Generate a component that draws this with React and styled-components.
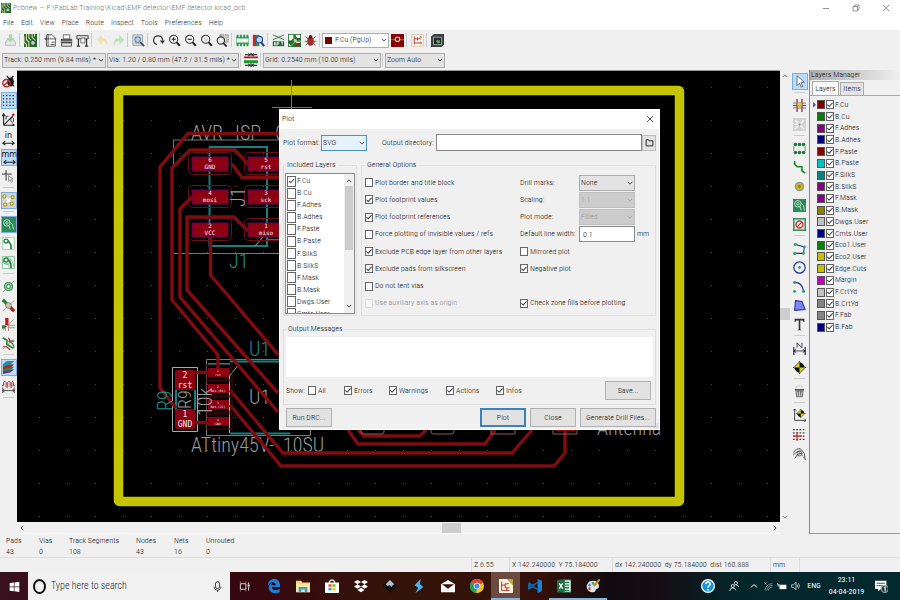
import React from 'react';
import styled, { createGlobalStyle, css } from 'styled-components';

const Global = createGlobalStyle`
  *, *::before, *::after { box-sizing: border-box; }
  body { margin: 0; background: #f0f0f0; }
  body, button, input, select, textarea {
    font-family: "Roboto Condensed", "Roboto", "Liberation Sans", sans-serif;
    font-size: 8px; font-weight: 300; line-height: 10px; color: #111;
  }
  button, input, select, textarea { margin: 0; padding: 0; border: 0; background: none; border-radius: 0; }
  svg { display: block; flex: none; }
`;

const Page = styled.div`display: flex; flex-direction: column; min-height: 100vh; background: #f0f0f0;`;

/* ---------- icons, all on a 16 unit grid ---------- */
const G = '#15803a';
const viaTrack = (
  <g fill="none">
    <path d="M6 5h2l3 5v5" stroke={G} strokeWidth="2" />
    <circle cx="5" cy="5" r="2.5" stroke={G} strokeWidth="1.5" fill="#fff" />
  </g>
);
const lens = (
  <>
    <circle cx="7" cy="6.5" r="5" fill="#f3f6f8" stroke="#333" strokeWidth="1.3" />
    <path d="M10.5 10l4 4.5" stroke="#222" strokeWidth="2.4" />
  </>
);
const board = (
  <>
    <path fill="#1f6d2c" d="M0 0h16v16H0z" />
    <path d="M3 0v7l3 3v6M6 0v5l3 3M10 0v4l4 4M0 3v7l3 3v3M13 0v3" fill="none" stroke="#e7e3b0" strokeWidth="1.3" />
    <circle cx="11" cy="11" r="3" fill="#c9cdb0" stroke="#333" />
  </>
);
const chipShape = (
  <>
    <path d="M2 1v14M6 1v14M10 1v14M14 1v14" stroke="#2c9a4f" strokeWidth="2.4" />
    <path d="M0 5h16v6H0z" fill="#8cc79f" />
    <path d="M1 6h14v4H1z" fill="#eef3ee" />
    <path d="M0 4h16M0 12h16" stroke="#2c9a4f" strokeWidth="1.500" />
  </>
);
const target = (
  <>
    <path d="M8 0v16M0 8h16" stroke="#111" />
    <path d="M8 1l7 7-7 7-7-7z" fill="#d8d02a" stroke="#111" strokeWidth=".8" />
    <path d="M8 2a6 6 0 0 1 6 6H8zM8 14a6 6 0 0 1-6-6h6z" fill="#111" />
  </>
);
const icons = {
  save: <><path d="M2 10l2-3h8l2 3v4H2z" fill="#dfe6e3" stroke="#9aa8a0" /><path d="M10 0v5h3l-5 5-5-5h3V1z" fill="#9bd19f" /></>,
  board,
  page: <><path d="M3 1h7l4 4v10H3z" fill="#fff" stroke="#444" /><path d="M1 6h14M5 0v15M1 6l2-2M1 6l2 2M8 13h5M9 10h4" stroke="#333" fill="none" /></>,
  print: <><path d="M4 1h8v5H4z" fill="#fff" stroke="#555" /><path d="M1 6h14v5H1z" fill="#555" /><path d="M2 11h12v4H2z" fill="#e8e8e8" stroke="#333" /><path d="M1 9h14" stroke="#bbb" /></>,
  plotter: <><path d="M1 2h14v4H1z" fill="#ddd" stroke="#333" /><path d="M3 6v9M13 6v9M1 15h4M11 15h4" stroke="#333" strokeWidth="1.5" /><path d="M6 5h5v6H6z" fill="#fff" stroke="#555" /></>,
  undo: <path d="M13 15c3-6-1-10-6-10V1L1 7l6 6V9c3 0 6 1 6 6z" fill="#efdf98" />,
  redo: <path d="M3 15C0 9 4 5 9 5V1l6 6-6 6V9c-3 0-6 1-6 6z" fill="#b5ddb0" />,
  find: <><path d="M1 1h12v13H1z" fill="#d5dce6" stroke="#93a0b2" /><path d="M3 4h8M3 11h6" stroke="#8798b0" /><circle cx="7" cy="7" r="3.5" fill="#b8d0ea" stroke="#566" /><path d="M10 10l5 5" stroke="#445" strokeWidth="2" /></>,
  refresh: <><path d="M6 13A5.5 5.5 0 1 1 13 8" fill="none" stroke="#333" strokeWidth="1.5" /><path d="M9.500 8h6.500l-3 4z" fill="#333" /></>,
  zoomIn: <>{lens}<path d="M4.500 6.500h5M7 4v5" stroke="#222" strokeWidth="1.4" /></>,
  zoomOut: <>{lens}<path d="M4.500 6.500h5" stroke="#222" strokeWidth="1.4" /></>,
  zoomFit: <>{lens}<path d="M4.500 4.500h5v4h-5z" fill="#d6d6d6" /></>,
  zoomArea: <><path d="M5 1h10v9H5z" fill="#ccc" stroke="#666" strokeDasharray="2 1" /><circle cx="6" cy="8" r="4.500" fill="#eee" stroke="#333" strokeWidth="1.400" /><path d="M9 11l4 4.500" stroke="#222" strokeWidth="2" /></>,
  chip: chipShape,
  library: <><path d="M1 1h4v14H1z" fill="#b8322a" /><path d="M5 1h4v14H5z" fill="#2e8b57" /><circle cx="9" cy="7" r="4" fill="#bcd8f3" stroke="#2758a0" strokeWidth="1.500" /><path d="M11 10l4 5" stroke="#223e88" strokeWidth="2.500" /></>,
  netlist: <><path d="M1 1h14v14H1z" fill="#e4eee6" /><path d="M1 1l14 6M15 1L1 7" stroke="#2a6b3f" /><path d="M1 9h14v6H1z" fill="#1d5b33" /><path d="M3 14v-4l2 4v-4M7 14v-4h2M7 12h2M11 10h3M12.500 10v4" stroke="#fff" fill="none" /></>,
  update: <><path d="M0 0h16v16H0z" fill="#236b31" /><path d="M1 8V1h6v4l-3 3zM9 1h6v4h-4zM1 11l3 4H1zM10 9l5-1v3h-5z" fill="#eef0e6" /><path d="M7 1v4l4 4h5M4 15l5-6" stroke="#58a868" strokeWidth="1.500" fill="none" /><circle cx="9" cy="8" r="2" fill="#d7cf8e" /><circle cx="12" cy="13" r="2" fill="#b21818" /></>,
  bug: <><path d="M2 3l3 3M14 3l-3 3M1 9h14M2 14l3-3M14 14l-3-3" stroke="#444" /><ellipse cx="8" cy="9" rx="4" ry="5.500" fill="#a32c2c" /><circle cx="8" cy="3.500" r="2.200" fill="#5a1414" /></>,
  layerPair: <><path d="M0 0h16v16H0z" fill="#8b0000" /><path d="M0 7h16" stroke="#2f8f2f" strokeWidth="1.500" /><circle cx="8" cy="6.500" r="2.800" fill="#8b0000" stroke="#e8e0c0" strokeWidth="1.300" /></>,
  footprintMode: <><path d="M1 1h14v14H1z" fill="#fff" stroke="#cdbb90" /><path d="M4 3v10M4 6h4M8 4v4M8 6h4M4 11h7" stroke="#b02828" strokeWidth="1.100" /><circle cx="12" cy="11" r="1.800" fill="#c89a48" /><circle cx="12" cy="4" r="1.500" fill="#c89a48" /></>,
  console: <><path d="M4 0h12v13l-3 3H0V3z" fill="#3b3f42" /><path d="M3 4h10v9H3z" fill="#202626" stroke="#bbb" /><path d="M6 9l3-3v2h2v3H9v1z" fill="#3ebf55" /></>,
  drcOff: <><path d="M6 1l3 4M14 1l-3 4M15 8h-4M15 14l-3-3" stroke="#222" strokeWidth="1.500" /><ellipse cx="10.500" cy="8.500" rx="4" ry="5.500" fill="#181818" /><circle cx="5.500" cy="10" r="4.500" fill="none" stroke="#b92b2b" strokeWidth="1.700" /><path d="M2.500 13l6-6" stroke="#b92b2b" strokeWidth="1.700" /></>,
  grid: <path d="M1 2h15M1 6h15M1 10h15M1 14h15" stroke="#222" strokeWidth="1.600" strokeDasharray="1.600 2.400" />,
  polar: <><path d="M2 15V2M2 15h13M2 15L14 3M0 4l2-3 2 3M13 13l2 2-2 1" stroke="#222" fill="none" strokeWidth="1.300" /><path d="M5 8V4M5 5c1-1 2-1 3-1" stroke="#222" fill="none" /><ellipse cx="12.500" cy="8.500" rx="1.800" ry="3" fill="none" stroke="#222" /><circle cx="14" cy="2" r="1.500" fill="#c11" /></>,
  dimArrow: <path d="M1 12.500h14M4 10l-3 2.500L4 15M12 10l3 2.500-3 2.500" stroke="#222" fill="none" strokeWidth="1.300" />,
  cursorCross: <><path d="M5 0v13M0 5h12" stroke="#333" strokeWidth="1.200" /><path d="M8 7v7l2-2 1.500 3 1.500-1-1.500-3h2z" fill="#eee" stroke="#888" /></>,
  ratsnest: <><path d="M3 3l10 9M13 3L3 13" stroke="#fff" strokeWidth="2" />{[[3, 3], [13, 4], [4, 13], [12, 12]].map(([x, y]) => <circle key={`${x}-${y}`} cx={x} cy={y} r="2" fill="#f1efa6" stroke="#a49a1d" strokeWidth="1.300" />)}</>,
  zoneFill: <><path d="M0 0h16v16H0z" fill="#2b8b58" /><g fill="none" stroke="#b5e0c4" strokeWidth="1.200"><circle cx="6" cy="6" r="4" /><circle cx="6" cy="6" r="1.500" /><path d="M10 5l3 3 1 6M7 9l2 1 1 4" /></g></>,
  zoneNone: <><path d="M.5.500h15v15H.5z" fill="#fff" stroke="#8fc7a0" />{viaTrack}</>,
  zoneOutline: <><path d="M.5.500h15v15H.5z" fill="#fff" stroke="#6bb583" /><circle cx="6" cy="6" r="4.500" fill="none" stroke="#58ab74" />{viaTrack}<path d="M4 9c3 0 4 1 5 5M10 4c3 2 4 5 4 9" fill="none" stroke="#58ab74" /></>,
  viaSketch: <><path d="M1 15L15 1" stroke="#888" /><circle cx="8" cy="8" r="5" fill="#8cc99e" stroke="#1c7b3d" /><circle cx="8" cy="8" r="2.500" fill="#e9f5ec" stroke="#1c7b3d" /></>,
  padSketch: <><path d="M1 15L15 2" stroke="#999" /><path d="M1 1l5 5" stroke="#208238" strokeWidth="4" /><path d="M10 10l5 5" stroke="#bc1d1d" strokeWidth="4" /><circle cx="8" cy="8" r="3.500" fill="#c9c6b3" stroke="#777" /></>,
  trackSketch: <><path d="M6 0v9" stroke="#c21818" strokeWidth="4" /><path d="M0 11h5" stroke="#208238" strokeWidth="4" /><path d="M1 15L15 1" stroke="#999" /><path d="M4 11v5M8 8v8" stroke="#c66" /><path d="M7 9h9M7 12h9" stroke="#4fab62" /></>,
  contrast: <><path d="M1 1l5 3v5l8 5" stroke="#208238" strokeWidth="2" fill="none" /><path d="M8 1l2 4h5" stroke="#bb2222" strokeWidth="1.500" fill="none" /><path d="M1 12h5l4 4" stroke="#bb2222" strokeWidth="1.500" fill="none" /><path d="M8 5l5 3 2 5" stroke="#208238" strokeWidth="1.500" fill="none" /><path d="M1 15L14 3" stroke="#888" /></>,
  layers: <><path d="M1 13l4-3h10l-5 4-9 2z" fill="#6b2c91" /><path d="M1 10l4-3h10l-4 4-10 2z" fill="#2d8b43" /><path d="M1 7l4-3h10l-4 4-10 2z" fill="#b02a2a" /><path d="M1 4l5-4h9l-4 4-10 3z" fill="#1f8fa8" /></>,
  tune: <><path d="M0 7h2V3q1.500-3 3 0v5q1.500 3 2 0V3q1.500-3 3 0v5q1.500 3 2 0V3q1-3 2 0v4h2" fill="none" stroke="#b52525" strokeWidth="1.200" /><path d="M1 9v7M15 9v7M1 13h14M3 11l-2 2 2 2M13 11l2 2-2 2" stroke="#333" fill="none" /></>,
  select: <path d="M5 1v12l3-3 2 5 2-1-2-5h4z" fill="#fff" stroke="#556" />,
  highlight: <><path d="M5 0v16M11 0v16" stroke="#a01c1c" strokeWidth="1.500" /><path d="M0 5h16M0 11h16" stroke="#777" strokeWidth="1.200" /><path d="M0 8h16" stroke="#2c7a2c" strokeWidth="1.500" /><circle cx="8" cy="7" r="3" fill="#dcc33a" opacity=".85" /></>,
  localRats: <><path d="M0 0h16v16H0z" fill="#d2d2d2" /><path d="M3 3l11 11M13 3L2 14M2 8l6-1" stroke="#fff" strokeWidth="1.500" /><circle cx="8" cy="8" r="1.500" fill="#999" /></>,
  addFootprint: <><path d="M1 5v6M15 5v6" fill="none" stroke="#2c9a4f" /><g fill="#207c3d">{[3, 8, 13].map(x => <React.Fragment key={x}><circle cx={x} cy="3" r="2.200" /><circle cx={x} cy="13" r="2.200" /></React.Fragment>)}</g></>,
  route: <path d="M2 0v4l3 3h6v5l4 3" fill="none" stroke="#1a8a33" strokeWidth="2" />,
  via: <><circle cx="8" cy="8" r="5" fill="#c9b916" stroke="#9a9a9a" strokeWidth="1.800" /><circle cx="8" cy="8" r="1.800" fill="#8a8012" /></>,
  keepout: <><path d="M0 0h16v16H0z" fill="#3a9462" /><path d="M2 2h12v12H2z" fill="#eee" /><circle cx="8" cy="8" r="4.200" fill="#fff" stroke="#c33" strokeWidth="1.800" /><path d="M5.500 10.500l5-5" stroke="#c33" strokeWidth="1.500" /></>,
  polyline: <><path d="M3 3l11 3-1 8H2" fill="none" stroke="#2633a0" strokeWidth="1.300" /><g fill="#3aa36b"><circle cx="3" cy="3" r="2" /><circle cx="2" cy="14" r="2" /><circle cx="14" cy="6" r="1.800" /><circle cx="13" cy="14" r="1.800" /></g></>,
  circle: <><circle cx="8" cy="8" r="7" fill="none" stroke="#2633a0" strokeWidth="1.500" /><circle cx="8" cy="8" r="1.700" fill="#2c9a6a" /></>,
  arc: <><path d="M2 3c6 0 10 4 11 11" fill="none" stroke="#2633a0" strokeWidth="1.600" /><circle cx="2" cy="3" r="1.800" fill="#2c9a6a" /><circle cx="2" cy="14" r="1.800" fill="#2c9a6a" /><circle cx="13" cy="14" r="1.800" fill="#2c9a6a" /></>,
  polygon: <path d="M3 2l8 1 4 10-13 1z" fill="#7f86f0" stroke="#2a2fa8" strokeWidth="1.300" />,
  textTool: <path d="M2 1h12v4h-1l-1-2H9v11l2 1H5l2-1V3H4L3 5H2z" fill="#333" />,
  dimension: <><path d="M1 6v10M15 6v10" stroke="#2a2f8f" strokeWidth="1.600" /><path d="M1 11h14M4 9l-3 2 3 2M12 9l3 2-3 2M5 7V1l6 6V1" stroke="#222" fill="none" /></>,
  target,
  trash: <><path d="M2 5h12l-1 2H3z" fill="#555" /><path d="M3 7l1 8h8l1-8z" fill="#777" /><path d="M5 8l1 6M8 8v6M11 8l-1 6" stroke="#ddd" /><path d="M3 4c1-4 9-4 10 0" fill="none" stroke="#999" strokeDasharray="1 1" /></>,
  origin: <><path d="M2 0v14h14M0 2l2-2 2 2M14 12l2 2-2 2" fill="none" stroke="#222" /><g transform="translate(4 0) scale(.7)">{target}</g></>,
  gridOrigin: <><path d="M0 2h16M0 6h16M0 10h16M0 14h16" stroke="#333" strokeWidth="1.400" strokeDasharray="2 2" /><path d="M5 5v11M0 10h11" stroke="#c22" strokeWidth="1.300" /></>,
  measure: <><path d="M0 7q4-6 9-5l5 6 1 8M0 10q5-6 10-5M3 13q2-6 9-5" stroke="#444" fill="none" strokeWidth="1.100" /><path d="M7 5l8 10M2 14l7-6" stroke="#555" strokeDasharray="2 1" /><circle cx="8" cy="8" r="3" fill="none" stroke="#555" /></>,
  trackWidth: <><path d="M0 5h16" stroke="#b51a1a" strokeWidth="2" /><path d="M0 10h16" stroke="#199a2c" strokeWidth="3.500" /><path d="M8 0v3M8 16v-4M1 2h4M11 2h4M1 14h4M11 14h4" stroke="#111" strokeWidth="1.200" /><path d="M5 0v4l3-2zM11 0v4L8 2zM5 12v4l3-2zM11 12v4l-3-2z" fill="#111" /></>,
  folder: <path d="M2 3h4l1 2h7v9H2z" fill="none" stroke="#222" strokeWidth="1.700" />,
  close: <path d="M2 2l12 12M14 2L2 14" stroke="currentColor" strokeWidth="1.600" fill="none" />,
  min: <path d="M2 9h12" stroke="currentColor" strokeWidth="1.600" />,
  max: <path d="M2 5h9v9H2zM5 5V2h9v9h-3" stroke="currentColor" strokeWidth="1.500" fill="none" />,
  down: <path d="M2 5l6 6 6-6" stroke="currentColor" strokeWidth="2" fill="none" />,
  up: <path d="M2 11l6-6 6 6" stroke="currentColor" strokeWidth="2" fill="none" />,
  left: <path d="M11 2L5 8l6 6" stroke="currentColor" strokeWidth="2.500" fill="none" />,
  right: <path d="M5 2l6 6-6 6" stroke="currentColor" strokeWidth="2.500" fill="none" />,
  grip: <path d="M12 1h3v3h-3zM12 6h3v3h-3zM7 6h3v3H7zM12 11h3v3h-3zM7 11h3v3H7zM2 11h3v3H2z" fill="#bbb" />,
  windows: <path d="M1 3l6-1v6H1zM8 2l7-1v7H8zM1 9h6v6l-6-1zM8 9h7v7l-7-1z" fill="#fff" />,
  mic: <><rect x="5" y="1" width="6" height="10" rx="3" fill="none" stroke="#333" strokeWidth="1.400" /><path d="M3 8c0 7 10 7 10 0M8 13v3" fill="none" stroke="#333" strokeWidth="1.200" /></>,
  taskView: <><path d="M2 4h8v8H2zM2 1v1M10 1v1M2 14v1M10 14v1M14 2v3M14 8v6" fill="none" stroke="#ddd" strokeWidth="1.400" /><path d="M12.500 5h3v3h-3z" fill="#ddd" /></>,
  edge: <path d="M1 8C1 3 4 0 8.500 0 13 0 15 4 15 9H5.500c.3 4 5.500 4.500 9 2.500V15C8 18 2 15 2 10c0-3 2-5 4-6-1 1-1.300 2-1.300 3H10c0-5-7-4-9 1z" fill="#1b7fe0" />,
  explorer: <><path d="M0 2h6l1 2h9v11H0z" fill="#f6d77b" /><path d="M0 6h16v9H0z" fill="#fbe69b" /><path d="M3 9h10v6h-3v-3H6v3H3z" fill="#3b9fd6" /></>,
  store: <><path d="M5 5V3q3-4 6 0v2" fill="none" stroke="#fff" strokeWidth="1.300" /><path d="M0 4h16v12H0z" fill="#fff" /><path d="M4 6h3.500v3H4z" fill="#e9532b" /><path d="M8.500 6H12v3H8.500z" fill="#7db92c" /><path d="M4 10h3.500v3H4z" fill="#2ba3e3" /><path d="M8.500 10H12v3H8.500z" fill="#f7bd19" /></>,
  dropbox: <path d="M4 1l4 2.500L4 6 0 3.500zM12 1l4 2.500L12 6 8 3.500zM4 6l4 2.500L4 11 0 8.500zM12 6l4 2.500-4 2.500-4-2.500zM8 10l4 2.500L8 15l-4-2.500z" fill="#fff" />,
  inkscape: <><path d="M8 0l7 7q1 2-2 2l-2 1 2 2-3 1-2 3-2-3-3-1 2-1-3-2q-3-1-1-3z" fill="#0c0e10" /><path d="M8 1l5 5-2 1-1 2-2-2-3 1-2-2z" fill="#b9bec6" /></>,
  swift: <path d="M10 0L3 7l4 3-3 6 9-7-4-3z" fill="#49b5ec" />,
  mail: <><path d="M0 6l8-5 8 5v9H0z" fill="#fff" /><path d="M1 6h14l-7 5z" fill="#3b1206" /></>,
  chrome: <><circle cx="8" cy="8" r="8" fill="#f3bf1a" /><path d="M8 8L1 4a8 8 0 0 1 14 0z" fill="#dd4437" /><path d="M8 8l-1 8A8 8 0 0 1 1 4z" fill="#1fa05c" /><circle cx="8" cy="8" r="3.700" fill="#fff" /><circle cx="8" cy="8" r="2.900" fill="#4285f4" /></>,
  kicad: <><path d="M0 0h10l6 6v10H0z" fill="#f5efdc" /><path d="M9 0h7v7z" fill="#bda637" /><path d="M3 3v10M3 7h4M7 5v5M7 6l4-1M7 10h5M9 10v4M3 13h9" stroke="#a32626" fill="none" /></>,
  vscode: <><path d="M11 0l5 2v12l-5 2z" fill="#1b80cf" /><path d="M11 4L1 12l-1-1V9zM11 12L1 4 0 6v1z" fill="#0d6cb5" stroke="#0d6cb5" /></>,
  excel: <><path d="M7 1h9v14H7z" fill="#fff" stroke="#1d7044" /><path d="M9 4h5M9 7h5M9 10h5M9 13h5" stroke="#1d7044" strokeWidth="1.500" /><path d="M0 1l9-1v16l-9-1z" fill="#1d7044" /><path d="M2.500 5l4 6M6.500 5l-4 6" stroke="#fff" strokeWidth="1.500" /></>,
  paint: <><path d="M8 2C3 2 0 6 1 10s5 6 8 5 1-4 4-4 3-9-5-9z" fill="#d9e6ee" /><circle cx="4" cy="7" r="1.500" fill="#3a8fd1" /><circle cx="4" cy="11" r="1.500" fill="#e04b3c" /><circle cx="8" cy="5" r="1.500" fill="#40a84f" /><path d="M16 0l-7 8" stroke="#c98a2c" strokeWidth="2.500" /></>,
  help: <><circle cx="8" cy="8" r="7.300" fill="#1793dc" stroke="#fff" strokeWidth="1.400" /><path d="M5.500 6c0-4 5.500-3 5 0-.2 1.500-2.500 2-2.500 4M8 11.500v2" stroke="#fff" strokeWidth="1.700" fill="none" /></>,
  people: <g fill="none" stroke="#fff" strokeWidth="1.300"><circle cx="6" cy="8" r="2.500" /><path d="M1 16q1-5 5-5t5 4" /><circle cx="11" cy="3.500" r="2.500" /><path d="M11 6q3 0 5 4" /></g>,
  wifi: <g fill="none" stroke="#9fb0b2" strokeWidth="1.300"><path d="M2 15C2 8 8 3 15 3M5 15c0-5 4-9 10-9M8 15c0-4 3-6 7-6" /><path d="M1 1l3 3M4 1L1 4" stroke="#fff" /></g>,
  battery: <><path d="M4 6h11v7H4z" fill="#fff" /><path d="M1 3v3h3M1 8h3" stroke="#fff" strokeWidth="1.300" fill="none" /></>,
  volume: <g fill="none" stroke="#cfd8d8" strokeWidth="1.300"><path d="M1 6h3l4-4v12l-4-4H1zM10 6q1 2 0 4M12 4q3 4 0 8" /></g>,
  notice: <><path d="M0 1h14v10H7l-3 3v-3H0z" fill="#fff" /><path d="M2 4h10M2 7h8" stroke="#173338" /><circle cx="12" cy="11" r="4.500" fill="#24393c" stroke="#ccc" /><path d="M11 9.500l1.500-1V14" stroke="#fff" strokeWidth="1.300" fill="none" /></>,
};
const Icon = ({ name, size = 13 }) => (
  <svg width={size} height={size} viewBox="0 0 16 16" aria-hidden="true">{icons[name]}</svg>
);

/* ---------- window frame ---------- */
const TitleBar = styled.header`
  display: flex; align-items: center; gap: 2px; height: 16px; padding-left: 1px;
  background: #fff; color: #777;
  h1 { flex: 1; margin: 0; font-size: 8px; font-weight: 300; }
`;
const WindowButton = styled.button`display: grid; place-items: center; width: 28px; height: 16px; color: #777;`;
const MenuBar = styled.nav`display: flex; align-items: center; gap: 7px; height: 14px; padding-left: 3px; background: #fff;`;
const MenuButton = styled.button`color: #333;`;
const ToolRow = styled.div`display: flex; align-items: center; height: 20px; padding-left: 2px; gap: ${p => p.$gap || 0}px;`;
const ToolButton = styled.button`display: grid; place-items: center; width: 16px; height: 18px; opacity: ${p => (p.$dim ? 0.8 : 1)};`;
const VLine = styled.span`width: 2px; height: 14px; margin: 0 ${p => (p.$tight ? 0 : 1)}px; border-left: 1px solid #ccc;`;

const ComboBox = styled.span`
  display: inline-flex; position: relative; width: ${p => p.$w}px; height: ${p => p.$h || 15}px;
  color: ${p => (p.$disabled ? '#999' : '#111')};
  select {
    appearance: none; width: 100%; padding: 0 7px 0 ${p => p.$pad || 1}px; color: inherit; opacity: 1;
    border: 1px solid ${p => (p.$focus ? '#4a94c4' : p.$disabled ? '#bfbfbf' : '#adadad')};
    background: ${p => (p.$focus ? '#e5f1fb' : p.$disabled ? '#ccc' : p.$light ? '#fff' : '#e3e3e3')};
  }
  svg { position: absolute; right: 2px; top: 50%; translate: 0 -50%; pointer-events: none; }
`;
const ComboSwatch = styled.i`position: absolute; left: 3px; top: 4px; width: 7px; height: 7px; background: #7b0000;`;
const Combo = ({ value, label, id, disabled, swatch, ...rest }) => (
  <ComboBox $disabled={disabled} {...rest}>
    <select aria-label={label} id={id} disabled={disabled}><option>{value}</option></select>
    {swatch && <ComboSwatch />}
    <Icon name="down" size={6} />
  </ComboBox>
);

/* ---------- workspace ---------- */
const Workspace = styled.main`display: flex; flex: 1;`;
const SideTools = styled.div`display: flex; flex-direction: column; align-items: center; width: ${p => p.$w}px; padding-top: 2px;`;
const SideButton = styled.button`
  display: grid; place-items: center; width: 16px; height: 19px;
  ${p => p.$on && css`height: 17px; margin: 1px 0; border: 1px solid #7aaee0; background: ${p.$on};`}
`;
const HLine = styled.span`width: 11px; height: 1px; background: #ccc; margin: 1px 0 3px;`;
const Unit = styled.span`
  display: grid; justify-items: center; font: 8px/8px "DejaVu Sans", sans-serif;
  svg { margin-top: -7px; }
`;
const CanvasColumn = styled.div`display: flex; flex-direction: column; flex: 1; min-width: 0;`;
const Canvas = styled.div`
  position: relative; flex: 1; background: #000; border-top: 1px solid #999;
  > svg { position: absolute; inset: 0; width: 100%; height: 100%; }
`;
const HScroll = styled.div`
  display: flex; align-items: center; justify-content: space-between; height: 12px; padding: 0 2px; color: #444;
  border-bottom: 1px solid #fff;
`;
const VScroll = styled.div`
  display: flex; flex-direction: column; align-items: center; justify-content: space-between;
  width: 10px; padding: 3px 0 14px; color: #444;
`;
const Thumb = styled.span`
  background: #cdcdcd;
  ${p => (p.$v ? 'width: 10px; height: 12px; margin-top: 34px;' : 'width: 19px; height: 10px; margin-left: 106px;')}
`;

const LayersPanel = styled.aside`
  display: flex; flex-direction: column; flex: 0 0 91px; border-left: 1px solid #8a8a8a; border-bottom: 1px solid #999;
`;
const PanelHead = styled.h2`
  margin: 0; height: 10px; padding-left: 1px; font-size: 8px; line-height: 9px; font-weight: 300;
  background: linear-gradient(90deg, #adadad, #efefef);
`;
const Tabs = styled.div`display: flex; align-items: flex-end; gap: 1px; height: 16px; padding-left: 2px; border-bottom: 1px solid #aaa;`;
const Tab = styled.button`
  width: ${p => (p.$on ? 27 : 24)}px; height: ${p => (p.$on ? 14 : 13)}px;
  border: 1px solid #aaa; border-bottom: 0; background: ${p => (p.$on ? '#fafafa' : '#e4e4e4')};
`;
const LayerRows = styled.ul`
  display: grid; grid-template-rows: repeat(20, 1fr); height: 234px; margin: 3px 0 0; padding: 0 0 0 3px; list-style: none;
  li { display: flex; align-items: center; gap: 1px; }
`;
const ActiveMark = styled.span`
  width: 3px; height: 6px; background: ${p => (p.$on ? '#4b50c8' : 'transparent')}; clip-path: polygon(0 0, 100% 50%, 0 100%);
`;
const Swatch = styled.span`width: 8px; height: 9px; border: 1px solid #555; background: ${p => p.$c};`;

const Check = styled.input.attrs({ type: 'checkbox' })`
  appearance: none; display: grid; place-items: center; flex: none; width: ${p => p.$w || 8}px; height: ${p => p.$h || 9}px;
  border: 1px solid #666; background: #fff;
  &:checked::before {
    content: ''; width: 6px; height: 6px; background: #333;
    clip-path: polygon(0 54%, 12% 42%, 36% 66%, 88% 10%, 100% 20%, 38% 88%);
  }
  &:disabled { border-color: #ddd; background: #f8f8f8; }
`;

/* ---------- plot dialog ---------- */
const Dialog = styled.section`
  position: absolute; left: 262px; top: 38px; width: 381px;
  background: #f0f0f0; border: 1px solid #fff; border-top: 0;
`;
const DialogTitle = styled.header`
  display: flex; align-items: center; justify-content: space-between; height: 20px; padding: 0 5px 0 2px; background: #fff;
  h2 { margin: 0; font-size: 8px; font-weight: 300; }
  button { color: #222; }
`;
const DialogBody = styled.form`display: flex; flex-direction: column; padding: 5px 3px 2px 3px;`;
const PathRow = styled.div`
  display: flex; align-items: center; height: 17px;
  label + span { margin-left: 1px; }
  span + label { margin-left: 15px; }
  label { flex: none; min-width: 37px; }
`;
const TextBox = styled.input`
  height: ${p => p.$h || 17}px; border: 1px solid #8a8a8a; background: #fff; padding: 0 3px;
  ${p => (p.$w ? `width: ${p.$w}px;` : 'flex: 1; margin-left: 2px; min-width: 0;')}
`;
const Browse = styled.button`display: grid; place-items: center; width: 14px; height: 16px; background: #e3e3e3; border: 1px solid #bbb;`;
const Columns = styled.div`display: flex; gap: 4px; margin-top: ${p => p.$top}px;`;
const Group = styled.fieldset`
  margin: 0; min-width: 0; border: 1px solid #dfdfdf; padding: ${p => p.$p};
  ${p => (p.$w ? `flex: 0 0 ${p.$w}px;` : 'flex: 1;')}
  legend { margin-left: 0; padding: 0 2px; }
`;
const ListBox = styled.div`display: flex; height: 141px; border: 1px solid #8a8a8a; background: #fff; overflow: hidden;`;
const ListRows = styled.div`
  display: grid; grid-template-rows: repeat(12, 1fr); height: 146px; flex: 1; padding: 1px 0 0 1px;
  label { display: flex; align-items: center; gap: 1px; }
`;
const ListScroll = styled.div`
  display: flex; flex-direction: column; align-items: center; width: 10px; padding: 4px 0; background: #f0f0f0;
  i { width: 8px; height: 64px; margin: 2px 0 auto; background: #cdcdcd; }
`;
const Options = styled.div`display: grid; grid-template-columns: 155px 1fr; grid-template-rows: repeat(8, 1fr); height: 138px;`;
const OptionLabel = styled.label`display: flex; align-items: center; gap: 2px; color: ${p => (p.$off ? '#888' : '#111')};`;
const Setting = styled.div`display: flex; align-items: center; gap: 2px; label { flex: 0 0 57px; white-space: nowrap; }`;
const Messages = styled.textarea`display: block; width: 100%; height: 40px; resize: none; background: #fff;`;
const ShowRow = styled.div`
  display: grid; grid-template-columns: 22px 36px 45px 57px 50px 1fr auto; align-items: center; height: 19px; margin-top: 4px; padding-right: 2px;
`;
const PushButton = styled.button`
  width: ${p => p.$w || 46}px; height: 19px; background: #e2e2e2; white-space: nowrap;
  border: ${p => (p.$main ? '2px solid #3a82b8' : '1px solid #b0b0b0')};
`;
const Actions = styled.footer`
  display: flex; gap: 4px; margin-top: 3px; padding-left: 3px;
  button:first-child { margin-right: auto; }
`;
const Grip = styled.span`position: absolute; right: 0; bottom: 0;`;

/* ---------- status area ---------- */
const Counts = styled.dl`
  display: flex; height: 24px; margin: 0; padding: 1px 6px 0; border-bottom: 1px solid #ddd;
  dt, dd { margin: 0; line-height: 11px; }
`;
const CountItem = styled.div`flex: 0 0 ${p => p.$w}px;`;
const StatusBar = styled.div`display: grid; grid-template-columns: 1fr 38px 103px 158px 29px 101px; height: 14px; align-items: center;`;
const StatusCell = styled.span`height: 14px; padding-left: 2px; line-height: 14px; border-left: 1px solid #ddd; white-space: nowrap;`;

const TaskBar = styled.footer`
  display: flex; align-items: center; height: 28px; color: #fff;
  background: linear-gradient(90deg, #38101e 0, #35080f 28%, #331409 45%, #35100a 60%, #100a10 68%, #150d12 73%, #03262b 82%, #03292e 100%);
`;
const TaskButton = styled.button`
  display: grid; place-items: center; width: ${p => p.$w || 29}px; height: 28px; color: #fff;
  background: ${p => (p.$on ? '#6d4a3f' : 'none')};
  border-bottom: 2px solid ${p => (p.$open ? '#7fb5dc' : 'transparent')};
  border-top: 2px solid ${p => (p.$on ? '#6d4a3f' : 'transparent')};
`;
const Search = styled.label`
  display: flex; align-items: center; gap: 5px; width: 202px; height: 28px; padding: 0 7px 0 5px; background: #f1f1f1;
  input { flex: 1; min-width: 0; font-size: 10px; line-height: 14px; &::placeholder { color: #222; opacity: 1; } }
`;
const Ring = styled.span`width: 13px; height: 15px; border: 2px solid #111; border-radius: 50%;`;
const Tray = styled.div`display: flex; align-items: center; margin-left: auto; padding-right: 6px;`;
const Lang = styled.button`width: 22px; color: #fff; font-size: 8px; font-weight: 400;`;
const Clock = styled.time`width: 43px; text-align: center; font-size: 8px; font-weight: 400; line-height: 12px;`;

/* ---------- board drawing ---------- */
const pads = [
  [192, 157, '6', 'GND'], [192, 190, '4', 'mosi'], [192, 223, '2', 'VCC'],
  [248, 157, '5', 'rst'], [248, 190, '3', 'sck'], [248, 223, '1', 'miso'],
];
const PadText = styled.text`font: ${p => p.$s}px "DejaVu Sans Mono", monospace; fill: ${p => p.fill || '#eee'};`;
const SilkText = styled.text`
  font: 300 ${p => p.$s || 20}px "Roboto Condensed", "Roboto", sans-serif; fill: ${p => p.fill || '#9a9a9a'};
`;
const Board = () => (
  <svg role="img" aria-label="Circuit board">
    <defs>
      <pattern id="dots" x="39" y="87" width="28" height="33" patternUnits="userSpaceOnUse">
        <path d="M0 0h1v1H0z" fill="#4a4a4a" />
      </pattern>
    </defs>
    <g transform="translate(-17 -71)" fill="none">
      <path d="M17 71h1600v1000H17z" fill="url(#dots)" />
      <rect x="118.500" y="90.500" width="561" height="411" rx="1" stroke="#c4c400" strokeWidth="9.500" strokeLinejoin="round" />
      <path d="M291.500 80v29M272 107.500h40M173.500 165v-25h106M173.500 253.500h106M206.500 359.500h104v76h-104z" stroke="#777" />
      <path d="M172.500 367.500h25v64h-25z" stroke="#aaa" />
      <path d="M209.500 147v99h57.500v-6h13M209 147h58v99" stroke="#168080" strokeWidth="2" />
      <path d="M208 364h22M230 361.500h50M230 433.500h60M176 390v20M195 390v20" stroke="#168080" strokeWidth="2" />
      <path d="M229.500 433v-57l8-10M263 237l-8 9" stroke="#aaa" />
      <SilkText x="191" y="140">AVR</SilkText>
      <SilkText x="235" y="140">ISP</SilkText>
      <SilkText x="275" y="140">C</SilkText>
      <SilkText x="191" y="452">ATtiny45V-</SilkText>
      <SilkText x="283" y="452">10SU</SilkText>
      <SilkText x="249" y="356" fill="#189090">U1</SilkText>
      <SilkText x="249" y="404">U1</SilkText>
      <g stroke="#800c10" strokeWidth="3.400">
        <path d="M290 133.500H188l-28 33.500V388l16 20M248 164l-13-14h-45l-18 18V300l46 55v14M192 197l-12 12v88l98 115M248 231l-14-14h-47v73l91 103M232 164l10 13.500h48M210.500 236v39l68 80" />
        <path d="M194 372.500h16M194 422.500h16M230 390l53 63h229l20-23M230 405l51 61h273l11-13v-22M348 430l10 14h127l10-14M358 430l6 6h56l6-6" />
      </g>
      {pads.map(([x, y, n, t]) => (
        <g key={n}>
          <rect x={x - 3.500} y={y - 4.500} width="43" height="22" rx="4" stroke="#6b1010" />
          <rect x={x} y={y} width="36" height="14" fill="#8c0012" stroke="#65005f" />
          <PadText $s={6} x={x + 18} y={y + 5} textAnchor="middle">{n}</PadText>
          <PadText $s={6} x={x + 18} y={y + 12} textAnchor="middle">{t}</PadText>
        </g>
      ))}
      {[368, 384, 400, 417].map((y, i) => (
        <g key={y}>
          <rect x="206" y={y - 3} width="26" height="15" stroke="#4b0b0b" />
          <rect x="208" y={y} width="21" height="9" fill="#8c0012" />
          <PadText $s={3} x="218" y={y + 4} textAnchor="middle">{i + 1}</PadText>
          <PadText $s={3} x="218" y={y + 8} textAnchor="middle">{['rst', 'Net-(R1)', 'Net-(J2)', 'GND'][i]}</PadText>
        </g>
      ))}
      {[[370, '2', 'rst'], [409, '1', 'GND']].map(([y, n, t]) => (
        <g key={n}>
          <rect x="175" y={y} width="20" height="20" rx="2" fill="#8c0012" />
          <PadText $s={8} x="185" y={y + 8} textAnchor="middle">{n}</PadText>
          <PadText $s={8} x="185" y={y + 18} textAnchor="middle">{t}</PadText>
        </g>
      ))}
      <path d="M361 427h23v5q0 2-3 2h-18q-2 0-2-3zM431 427h23v5q0 2-3 2h-18q-2 0-2-3zM491 427h24v7h-24zM553 427h24v7h-24z" stroke="#8a5a5a" />
      <path d="M555 427h20v4h-20z" fill="#8c0012" />
      <SilkText transform="translate(245 207) rotate(-90)">J1</SilkText>
      <SilkText x="229" y="268" fill="#189090">J1</SilkText>
      <SilkText x="597" y="435">Antenna</SilkText>
      <SilkText transform="translate(172 411) rotate(-90)" fill="#189090">R9</SilkText>
      <SilkText $s={18} transform="translate(191 409) rotate(-90)">R9</SilkText>
      <SilkText transform="translate(212 416) rotate(-90)">10k</SilkText>
    </g>
  </svg>
);

/* ---------- data ---------- */
const topTools = [['save', 'Save', 1], null, ['board', 'Board setup'], null, ['page', 'Page settings'], ['print', 'Print'], ['plotter', 'Plot'], null,
  ['undo', 'Undo', 1], ['redo', 'Redo', 1], null, ['find', 'Find'], null, ['refresh', 'Redraw'], ['zoomIn', 'Zoom in'], ['zoomOut', 'Zoom out'],
  ['zoomFit', 'Zoom to fit'], ['zoomArea', 'Zoom to selection'], null, ['chip', 'Footprint editor'], ['library', 'Footprint viewer'], null,
  ['netlist', 'Load netlist'], ['update', 'Update board'], ['bug', 'Design rules check'], null];
const leftTools = [['drcOff', 'Disable DRC'], ['grid', 'Grid', '#b9dcf8'], ['polar', 'Polar coordinates'], ['in', 'Inches'], ['mm', 'Millimeters', '#b9dcf8'],
  ['cursorCross', 'Cursor shape'], null, ['ratsnest', 'Ratsnest', '#cfd3d6'], null, ['zoneFill', 'Filled zones', '#2b8b58'], ['zoneNone', 'Hide zones'],
  ['zoneOutline', 'Zone outlines'], null, ['viaSketch', 'Sketch vias'], ['padSketch', 'Sketch pads'], ['trackSketch', 'Sketch tracks'],
  ['contrast', 'High contrast'], null, ['layers', 'Layers manager', '#b9dcf8'], ['tune', 'Microwave tools'], null];
const rightTools = [['select', 'Select', '#b9dcf8'], null, ['highlight', 'Highlight net'], ['localRats', 'Local ratsnest'], null, ['addFootprint', 'Add footprint'],
  ['route', 'Route track'], ['via', 'Add via'], ['zoneFill', 'Add zone'], ['keepout', 'Add keepout'], null, ['polyline', 'Add line'], ['circle', 'Add circle'],
  ['arc', 'Add arc'], ['polygon', 'Add polygon'], ['textTool', 'Add text'], null, ['dimension', 'Add dimension'], ['target', 'Add target'], null,
  ['trash', 'Delete'], null, ['origin', 'Drill origin'], ['gridOrigin', 'Grid origin'], ['measure', 'Measure']];
const layers = [['F.Cu', '#840000'], ['B.Cu', '#008400'], ['F.Adhes', '#840084'], ['B.Adhes', '#000084'], ['F.Paste', '#840000'], ['B.Paste', '#00c2c2'],
  ['F.SilkS', '#008484'], ['B.SilkS', '#840084'], ['F.Mask', '#840084'], ['B.Mask', '#848400'], ['Dwgs.User', '#c2c2c2'], ['Cmts.User', '#000084'],
  ['Eco1.User', '#008400'], ['Eco2.User', '#c2c200'], ['Edge.Cuts', '#c2c200'], ['Margin', '#c200c2'], ['F.CrtYd', '#c2c2c2'], ['B.CrtYd', '#848484'],
  ['F.Fab', '#848484'], ['B.Fab', '#000084']];
const counts = [['Pads', 43, 33], ['Vias', 0, 30], ['Track Segments', 108, 67], ['Nodes', 43, 38], ['Nets', 16, 32], ['Unrouted', 0, 40]];
const apps = ['taskView', 'edge', 'explorer', 'store', 'dropbox', 'inkscape', 'swift', 'mail', 'chrome', 'kicad', 'vscode', 'excel', 'paint'];

const Side = ({ items, w }) => (
  <SideTools $w={w}>
    {items.map((t, i) => t ? (
      <SideButton key={t[1]} $on={t[2]} type="button" aria-label={t[1]} title={t[1]}>
        {t[0] === 'in' || t[0] === 'mm' ? <Unit>{t[0]}<Icon name="dimArrow" /></Unit> : <Icon name={t[0]} />}
      </SideButton>
    ) : <HLine key={i} />)}
  </SideTools>
);
const Option = ({ text, on, off }) => (
  <OptionLabel $off={off}><Check defaultChecked={on} disabled={off} />{text}</OptionLabel>
);

function PlotDialog() {
  return (
    <Dialog role="dialog" aria-labelledby="plot-title">
      <DialogTitle><h2 id="plot-title">Plot</h2><button type="button" aria-label="Close dialog"><Icon name="close" size={8} /></button></DialogTitle>
      <DialogBody>
        <PathRow>
          <label htmlFor="format">Plot format:</label>
          <Combo id="format" value="SVG" $w={46} $h={16} $focus />
          <label htmlFor="dir">Output directory:</label>
          <TextBox id="dir" />
          <Browse type="button" aria-label="Browse"><Icon name="folder" size={9} /></Browse>
        </PathRow>
        <Columns $top={9}>
          <Group $w={74} $p="3px 1px 1px 1px">
            <legend>Included Layers</legend>
            <ListBox>
              <ListRows>
                {layers.slice(0, 12).map(([n], i) => <label key={n}><Check $h={11} $w={9} defaultChecked={i === 0} />{n}</label>)}
              </ListRows>
              <ListScroll><Icon name="up" size={6} /><i /><Icon name="down" size={6} /></ListScroll>
            </ListBox>
          </Group>
          <Group $p="4px 2px 1px 3px">
            <legend>General Options</legend>
            <Options>
              <Option text="Plot border and title block" />
              <Setting><label htmlFor="drill">Drill marks:</label><Combo id="drill" value="None" $w={56} $h={16} /></Setting>
              <Option text="Plot footprint values" on />
              <Setting><label htmlFor="scale">Scaling:</label><Combo id="scale" value="1:1" disabled $w={56} $h={16} /></Setting>
              <Option text="Plot footprint references" on />
              <Setting><label htmlFor="mode">Plot mode:</label><Combo id="mode" value="Filled" disabled $w={56} $h={16} /></Setting>
              <Option text="Force plotting of invisible values / refs" />
              <Setting><label htmlFor="line">Default line width:</label><TextBox id="line" defaultValue="0.1" $w={56} $h={16} />mm</Setting>
              <Option text="Exclude PCB edge layer from other layers" on />
              <Option text="Mirrored plot" />
              <Option text="Exclude pads from silkscreen" on />
              <Option text="Negative plot" on />
              <Option text="Do not tent vias" /><span />
              <Option text="Use auxiliary axis as origin" off />
              <Option text="Check zone fills before plotting" on />
            </Options>
          </Group>
        </Columns>
        <Columns $top={8}>
          <Group $p="3px 2px 4px 2px">
            <legend>Output Messages</legend>
            <Messages aria-label="Output Messages" />
            <ShowRow>
              <span>Show:</span>
              <Option text="All" /><Option text="Errors" on /><Option text="Warnings" on /><Option text="Actions" on /><Option text="Infos" on />
              <PushButton type="button">Save...</PushButton>
            </ShowRow>
          </Group>
        </Columns>
        <Actions>
          <PushButton type="button">Run DRC...</PushButton>
          <PushButton type="button" $main>Plot</PushButton>
          <PushButton type="button">Close</PushButton>
          <PushButton type="button" $w={76}>Generate Drill Files...</PushButton>
        </Actions>
      </DialogBody>
      <Grip><Icon name="grip" size={6} /></Grip>
    </Dialog>
  );
}

export default function App() {
  return (
    <Page>
      <Global />
      <TitleBar>
        <Icon name="board" size={10} />
        <h1>Pcbnew — F:\FabLab Training\Kicad\EMF detector\EMF detector.kicad_pcb</h1>
        <WindowButton aria-label="Minimize"><Icon name="min" size={8} /></WindowButton>
        <WindowButton aria-label="Restore"><Icon name="max" size={8} /></WindowButton>
        <WindowButton aria-label="Close"><Icon name="close" size={8} /></WindowButton>
      </TitleBar>
      <MenuBar>
        {['File', 'Edit', 'View', 'Place', 'Route', 'Inspect', 'Tools', 'Preferences', 'Help'].map(m => <MenuButton key={m}>{m}</MenuButton>)}
      </MenuBar>
      <ToolRow>
        {topTools.map((t, i) => t
          ? <ToolButton key={t[1]} $dim={t[2]} aria-label={t[1]}><Icon name={t[0]} /></ToolButton>
          : <VLine key={i} />)}
        <Combo label="Active layer" value="F.Cu (PgUp)" swatch $w={67} $pad={12} $light />
        <ToolButton aria-label="Layer pair"><Icon name="layerPair" /></ToolButton><VLine />
        <ToolButton aria-label="Footprint mode"><Icon name="footprintMode" /></ToolButton><VLine />
        <ToolButton aria-label="Scripting console"><Icon name="console" /></ToolButton>
      </ToolRow>
      <ToolRow $gap={1}>
        <Combo label="Track width" value="Track: 0.250 mm (9.84 mils) *" $w={104} />
        <Combo label="Via size" value="Via: 1.20 / 0.80 mm (47.2 / 31.5 mils) *" $w={132} />
        <VLine $tight /><ToolButton aria-label="Auto track width"><Icon name="trackWidth" size={14} /></ToolButton><VLine $tight />
        <Combo label="Grid" value="Grid: 0.2540 mm (10.00 mils)" $w={118} />
        <VLine $tight />
        <Combo label="Zoom" value="Zoom Auto" $w={60} />
      </ToolRow>
      <Workspace>
        <Side items={leftTools} w={17} />
        <CanvasColumn>
          <Canvas><Board /><PlotDialog /></Canvas>
          <HScroll><Icon name="left" size={6} /><Thumb /><Icon name="right" size={6} /></HScroll>
        </CanvasColumn>
        <VScroll><Icon name="up" size={6} /><Thumb $v /><Icon name="down" size={6} /></VScroll>
        <Side items={rightTools} w={19} />
        <LayersPanel>
          <PanelHead>Layers Manager</PanelHead>
          <Tabs role="tablist"><Tab role="tab" aria-selected="true" $on>Layers</Tab><Tab role="tab" aria-selected="false">Items</Tab></Tabs>
          <LayerRows>
            {layers.map(([n, c], i) => (
              <li key={n}><ActiveMark $on={i === 0} /><Swatch $c={c} /><Check id={`layer-${n}`} defaultChecked /><label htmlFor={`layer-${n}`}>{n}</label></li>
            ))}
          </LayerRows>
        </LayersPanel>
      </Workspace>
      <Counts>
        {counts.map(([n, v, w]) => <CountItem key={n} $w={w}><dt>{n}</dt><dd>{v}</dd></CountItem>)}
      </Counts>
      <StatusBar>
        <span />
        <StatusCell>Z 6.55</StatusCell>
        <StatusCell>X 142.240000&nbsp; Y 75.184000</StatusCell>
        <StatusCell>dx 142.240000&nbsp; dy 75.184000&nbsp; dist 160.888</StatusCell>
        <StatusCell>mm</StatusCell>
        <StatusCell />
      </StatusBar>
      <TaskBar>
        <TaskButton $w={28} aria-label="Start"><Icon name="windows" size={11} /></TaskButton>
        <Search><Ring /><input aria-label="Search" placeholder="Type here to search" /><Icon name="mic" size={11} /></Search>
        {apps.map((a, i) => <TaskButton key={a} aria-label={a} $on={a === 'kicad'} $open={i === 9 || i > 10}><Icon name={a} size={i ? 14 : 11} /></TaskButton>)}
        <Tray>
          <TaskButton $w={26} aria-label="Help"><Icon name="help" size={14} /></TaskButton>
          <TaskButton $w={26} aria-label="People"><Icon name="people" size={10} /></TaskButton>
          <TaskButton $w={14} aria-label="Hidden icons"><Icon name="up" size={8} /></TaskButton>
          <TaskButton $w={14} aria-label="Network"><Icon name="wifi" size={9} /></TaskButton>
          <TaskButton $w={14} aria-label="Battery"><Icon name="battery" size={10} /></TaskButton>
          <TaskButton $w={14} aria-label="Volume"><Icon name="volume" size={10} /></TaskButton>
          <Lang>ENG</Lang>
          <Clock>23:11<br />04-04-2019</Clock>
          <TaskButton $w={26} aria-label="Notifications"><Icon name="notice" size={13} /></TaskButton>
        </Tray>
      </TaskBar>
    </Page>
  );
}
